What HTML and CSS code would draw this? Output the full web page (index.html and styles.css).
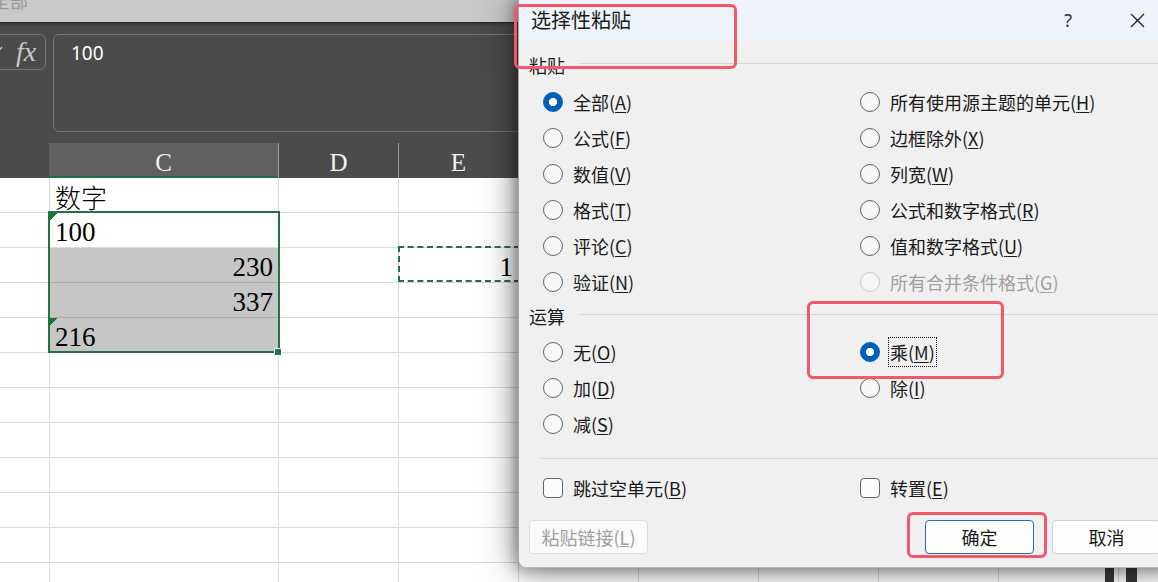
FILE: index.html
```html
<!DOCTYPE html>
<html lang="zh-CN">
<head>
<meta charset="utf-8">
<title>选择性粘贴</title>
<link rel="stylesheet" href="styles.css">
</head>
<body>
<div class="excel">
  <div class="ribbon-strip"><span class="ribbon-text">全部</span></div>
  <div class="formula-area">
    <div class="fx-box">
      <svg class="check" width="14" height="12" viewBox="0 0 14 12"><path d="M1 7 L5 11 L13 1" fill="none" stroke="#bdbdbd" stroke-width="1.4"/></svg>
      <span class="fx">fx</span>
    </div>
    <div class="formula-box">100</div>
  </div>
  <div class="col-headers">
    <div class="hdr corner"></div>
    <div class="hdr col-c">C</div>
    <div class="hdr col-w">D</div>
    <div class="hdr col-w">E</div>
    <div class="hdr col-w"></div>
    <div class="hdr col-w"></div>
    <div class="hdr col-w"></div>
    <div class="hdr col-w"></div>
    <div class="hdr col-w"></div>
  </div>
  <div class="grid">
    <div class="row">
      <div class="cell rn"></div>
      <div class="cell cc cjk">数字</div>
      <div class="cell cw"></div><div class="cell cw"></div><div class="cell cw"></div><div class="cell cw"></div><div class="cell cw"></div><div class="cell cw"></div><div class="cell cw"></div>
    </div>
    <div class="row">
      <div class="cell rn"></div>
      <div class="cell cc num tri">100</div>
      <div class="cell cw"></div><div class="cell cw"></div><div class="cell cw"></div><div class="cell cw"></div><div class="cell cw"></div><div class="cell cw"></div><div class="cell cw"></div>
    </div>
    <div class="row">
      <div class="cell rn"></div>
      <div class="cell cc num sel right">230</div>
      <div class="cell cw"></div>
      <div class="cell cw num right">1</div>
      <div class="cell cw"></div><div class="cell cw"></div><div class="cell cw"></div><div class="cell cw"></div><div class="cell cw"></div>
    </div>
    <div class="row">
      <div class="cell rn"></div>
      <div class="cell cc num sel right">337</div>
      <div class="cell cw"></div><div class="cell cw"></div><div class="cell cw"></div><div class="cell cw"></div><div class="cell cw"></div><div class="cell cw"></div><div class="cell cw"></div>
    </div>
    <div class="row">
      <div class="cell rn"></div>
      <div class="cell cc num sel tri">216</div>
      <div class="cell cw"></div><div class="cell cw"></div><div class="cell cw"></div><div class="cell cw"></div><div class="cell cw"></div><div class="cell cw"></div><div class="cell cw"></div>
    </div>
    <div class="row"><div class="cell rn"></div><div class="cell cc"></div><div class="cell cw"></div><div class="cell cw"></div><div class="cell cw"></div><div class="cell cw"></div><div class="cell cw"></div><div class="cell cw"></div><div class="cell cw"></div></div>
    <div class="row"><div class="cell rn"></div><div class="cell cc"></div><div class="cell cw"></div><div class="cell cw"></div><div class="cell cw"></div><div class="cell cw"></div><div class="cell cw"></div><div class="cell cw"></div><div class="cell cw"></div></div>
    <div class="row"><div class="cell rn"></div><div class="cell cc"></div><div class="cell cw"></div><div class="cell cw"></div><div class="cell cw"></div><div class="cell cw"></div><div class="cell cw"></div><div class="cell cw"></div><div class="cell cw"></div></div>
    <div class="row"><div class="cell rn"></div><div class="cell cc"></div><div class="cell cw"></div><div class="cell cw"></div><div class="cell cw"></div><div class="cell cw"></div><div class="cell cw"></div><div class="cell cw"></div><div class="cell cw"></div></div>
    <div class="row"><div class="cell rn"></div><div class="cell cc"></div><div class="cell cw"></div><div class="cell cw"></div><div class="cell cw"></div><div class="cell cw"></div><div class="cell cw"></div><div class="cell cw"></div><div class="cell cw"></div></div>
    <div class="row"><div class="cell rn"></div><div class="cell cc"></div><div class="cell cw"></div><div class="cell cw"></div><div class="cell cw"></div><div class="cell cw"></div><div class="cell cw"></div><div class="cell cw"></div><div class="cell cw"></div></div>
    <div class="row"><div class="cell rn"></div><div class="cell cc"></div><div class="cell cw"></div><div class="cell cw"></div><div class="cell cw"></div><div class="cell cw"></div><div class="cell cw"></div><div class="cell cw"></div><div class="cell cw"></div></div>
    <div class="selection"></div>
    <div class="sel-handle"></div>
    <div class="marquee"></div>
  </div>
</div>

<div class="bar bar1"></div>
<div class="bar bar2"></div>

<div class="dialog">
  <div class="dlg-title">
    <span class="dlg-title-text">选择性粘贴</span>
    <span class="dlg-help">?</span>
    <svg class="dlg-close" width="15" height="15" viewBox="0 0 15 15"><path d="M1 1 L14 14 M14 1 L1 14" stroke="#1f1f1f" stroke-width="1.3" fill="none"/></svg>
  </div>
  <div class="dlg-body">
    <div class="group-label"><span>粘贴</span><span class="sep"></span></div>
    <div class="opt-grid">
      <div class="opt"><span class="radio checked"></span><span>全部(<u>A</u>)</span></div>
      <div class="opt"><span class="radio"></span><span>所有使用源主题的单元(<u>H</u>)</span></div>
      <div class="opt"><span class="radio"></span><span>公式(<u>F</u>)</span></div>
      <div class="opt"><span class="radio"></span><span>边框除外(<u>X</u>)</span></div>
      <div class="opt"><span class="radio"></span><span>数值(<u>V</u>)</span></div>
      <div class="opt"><span class="radio"></span><span>列宽(<u>W</u>)</span></div>
      <div class="opt"><span class="radio"></span><span>格式(<u>T</u>)</span></div>
      <div class="opt"><span class="radio"></span><span>公式和数字格式(<u>R</u>)</span></div>
      <div class="opt"><span class="radio"></span><span>评论(<u>C</u>)</span></div>
      <div class="opt"><span class="radio"></span><span>值和数字格式(<u>U</u>)</span></div>
      <div class="opt"><span class="radio"></span><span>验证(<u>N</u>)</span></div>
      <div class="opt disabled"><span class="radio"></span><span>所有合并条件格式(<u>G</u>)</span></div>
    </div>
    <div class="group-label op-label"><span>运算</span><span class="sep"></span></div>
    <div class="opt-grid ops">
      <div class="opt"><span class="radio"></span><span>无(<u>O</u>)</span></div>
      <div class="opt"><span class="radio checked"></span><span class="focus">乘(<u>M</u>)</span></div>
      <div class="opt"><span class="radio"></span><span>加(<u>D</u>)</span></div>
      <div class="opt"><span class="radio"></span><span>除(<u>I</u>)</span></div>
      <div class="opt"><span class="radio"></span><span>减(<u>S</u>)</span></div>
    </div>
    <div class="hr"></div>
    <div class="opt-grid checks">
      <div class="opt"><span class="checkbox"></span><span>跳过空单元(<u>B</u>)</span></div>
      <div class="opt"><span class="checkbox"></span><span>转置(<u>E</u>)</span></div>
    </div>
    <div class="btn-row">
      <div class="btn btn-link disabled">粘贴链接(<u>L</u>)</div>
      <div class="btn btn-ok">确定</div>
      <div class="btn btn-cancel">取消</div>
    </div>
  </div>
</div>

<div class="annot a1"></div>
<div class="annot a2"></div>
<div class="annot a3"></div>
</body>
</html>
```

FILE: styles.css
```css
* { box-sizing: border-box; margin: 0; padding: 0; }
html, body { width: 1158px; height: 582px; overflow: hidden; }
body {
  position: relative;
  background: #fff;
  font-family: "Noto Sans CJK SC", "Noto Sans", sans-serif;
  color: #1a1a1a;
}

/* ---------- Excel background ---------- */
.excel { width: 1158px; height: 582px; overflow: hidden; }

.ribbon-strip {
  height: 22px;
  background: #c9c9c9;
  overflow: hidden;
}
.ribbon-text {
  display: block;
  margin-top: -12px;
  margin-left: -8px;
  font-size: 18px;
  line-height: 24px;
  color: #9a9a9a;
}

.formula-area {
  height: 121px;
  display: flex;
  gap: 7px;
  padding-top: 12px;
  margin-left: -20px;
  background: linear-gradient(#262626 0, #3e3e3e 2px, #4a4a4a 5px, #4b4b4b 100%);
}
.fx-box {
  flex: none;
  width: 66px;
  height: 36px;
  border: 1px solid #747474;
  border-radius: 6px;
  display: flex;
  align-items: center;
  padding-left: 8px;
}
.check { flex: none; }
.fx {
  margin-left: 13px;
  font-family: "Liberation Serif", serif;
  font-style: italic;
  font-size: 28px;
  line-height: 30px;
  color: #c8c8c8;
}
.formula-box {
  flex: 1;
  height: 98px;
  border: 1px solid #747474;
  border-radius: 6px;
  padding: 4px 17px;
  font-family: "Noto Sans", sans-serif;
  font-size: 19px;
  line-height: 28px;
  color: #fff;
}

.col-headers {
  display: flex;
  height: 35px;
  background: #4b4b4b;
}
.hdr {
  flex: none;
  border-right: 1px solid #9a9a9a;
  font-family: "Liberation Serif", serif;
  font-size: 25px;
  line-height: 35px;
  padding-top: 2px;
  color: #f2f2f2;
  text-align: center;
}
.hdr.corner { width: 49px; border-right: none; }
.hdr.col-c { width: 230px; background: #606060; box-shadow: inset 0 -2px #1f7145; }
.hdr.col-w { width: 120px; }

.grid { position: relative; }
.row { display: flex; height: 35px; }
.cell {
  flex: none;
  height: 35px;
  border-right: 1px solid #dadada;
  border-bottom: 1px solid #dadada;
  display: flex;
  align-items: flex-end;
  padding: 0 5px 0 5px;
  line-height: 29px;
  color: #000;
}
.cell.rn { width: 50px; }
.cell.cc { width: 229px; }
.cell.cw { width: 120px; }
.cell.cjk { font-family: "Noto Sans CJK SC", sans-serif; font-size: 26px; font-weight: 300; line-height: 31px; }
.cell.num { font-family: "Liberation Serif", serif; font-size: 27px; }
.cell.right { justify-content: flex-end; }
.cell.sel { background-color: #c6c6c6; border-bottom-color: #a9a9a9; }
.cell.tri {
  background-image: linear-gradient(135deg, #137a2e 0, #137a2e 5.5px, transparent 5.5px);
  background-repeat: no-repeat;
}

.selection {
  position: absolute;
  left: 48px;
  top: 33px;
  width: 232px;
  height: 142px;
  border: 2px solid #217346;
}
.sel-handle {
  position: absolute;
  left: 274px;
  top: 170px;
  width: 8px;
  height: 8px;
  background: #217346;
  border: 1px solid #fff;
}
.marquee {
  position: absolute;
  left: 398px;
  top: 68px;
  width: 122px;
  height: 36px;
  border: 2px dashed #217346;
}

.bar { position: absolute; top: 566px; height: 16px; background: #3a3a3a; }
.bar1 { left: 1105px; width: 9px; }
.bar2 { left: 1126px; width: 11px; }

/* ---------- Dialog ---------- */
.dialog {
  position: absolute;
  left: 518px;
  top: 0;
  width: 660px;
  height: 568px;
  background: #f0f0f0;
  border-left: 1px solid #a8a8a8;
  border-bottom: 1px solid #b8b8b8;
  border-radius: 0 0 0 8px;
  box-shadow: 0 0 34px 2px rgba(0, 0, 0, 0.5), -3px 2px 12px rgba(0, 0, 0, 0.25);
}
.dlg-title {
  height: 40px;
  background: #eef2f9;
  display: flex;
  align-items: center;
  padding-left: 12px;
}
.dlg-title-text { flex: 1; font-size: 20px; line-height: 26px; color: #1a1a1a; }
.dlg-help {
  font-family: "Noto Sans", sans-serif;
  font-size: 18px;
  line-height: 26px;
  color: #333;
  margin-right: 58px;
}
.dlg-close { flex: none; margin-right: 33px; }

.dlg-body { padding-left: 10px; }
.group-label {
  display: flex;
  align-items: center;
  height: 26px;
  margin-top: 12px;
  font-size: 18px;
  line-height: 26px;
}
.group-label .sep {
  flex: 1;
  height: 1px;
  margin-left: 14px;
  margin-top: -4px;
  background: #d7d7d7;
}
.op-label { margin-top: 3px; }

.opt-grid {
  display: grid;
  grid-template-columns: 317px 1fr;
  grid-auto-rows: 36px;
  margin-top: 6px;
  padding-left: 14px;
}
.opt-grid.ops { margin-top: 5px; }
.opt {
  display: flex;
  align-items: center;
  gap: 10px;
  font-size: 18px;
  line-height: 26px;
  color: #1a1a1a;
}
.opt u { text-underline-offset: 2px; text-decoration-thickness: 1px; }
.radio {
  flex: none;
  width: 20px;
  height: 20px;
  border-radius: 50%;
  border: 1px solid #636363;
  background: #f8f8f8;
}
.radio.checked {
  border-color: #005fb8;
  background: radial-gradient(circle, #fff 0, #fff 3.8px, #005fb8 4.4px);
}
.opt.disabled { color: #a0a0a0; }
.opt.disabled .radio { border-color: #c9c9c9; background: #f5f5f5; }
.focus {
  margin-left: -2px;
  padding: 1px 1px;
  border: 1px dotted #111;
}

.hr {
  height: 1px;
  margin: 16px 0 0 12px;
  background: #d7d7d7;
}
.opt-grid.checks { margin-top: 11px; }
.checkbox {
  flex: none;
  width: 20px;
  height: 20px;
  border-radius: 4px;
  border: 1px solid #636363;
  background: #fbfbfb;
}

.btn-row { display: flex; margin-top: 14px; }
.btn {
  flex: none;
  height: 34px;
  border: 1px solid #d0d0d0;
  border-radius: 4px;
  background: #fdfdfd;
  font-size: 18px;
  line-height: 26px;
  display: flex;
  align-items: center;
  justify-content: center;
  color: #1a1a1a;
}
.btn-link { width: 119px; }
.btn.disabled { color: #a0a0a0; border-color: #dedede; background: #fafafa; }
.btn-ok { width: 109px; margin-left: 277px; border-color: #1a6ec4; }
.btn-cancel { width: 109px; margin-left: 18px; }

/* ---------- red annotations ---------- */
.annot {
  position: absolute;
  border: 3px solid #f2576a;
  border-radius: 6px;
}
.a1 { left: 514px; top: 4px; width: 223px; height: 65px; }
.a2 { left: 807px; top: 301px; width: 197px; height: 78px; }
.a3 { left: 907px; top: 512px; width: 140px; height: 46px; }
```
